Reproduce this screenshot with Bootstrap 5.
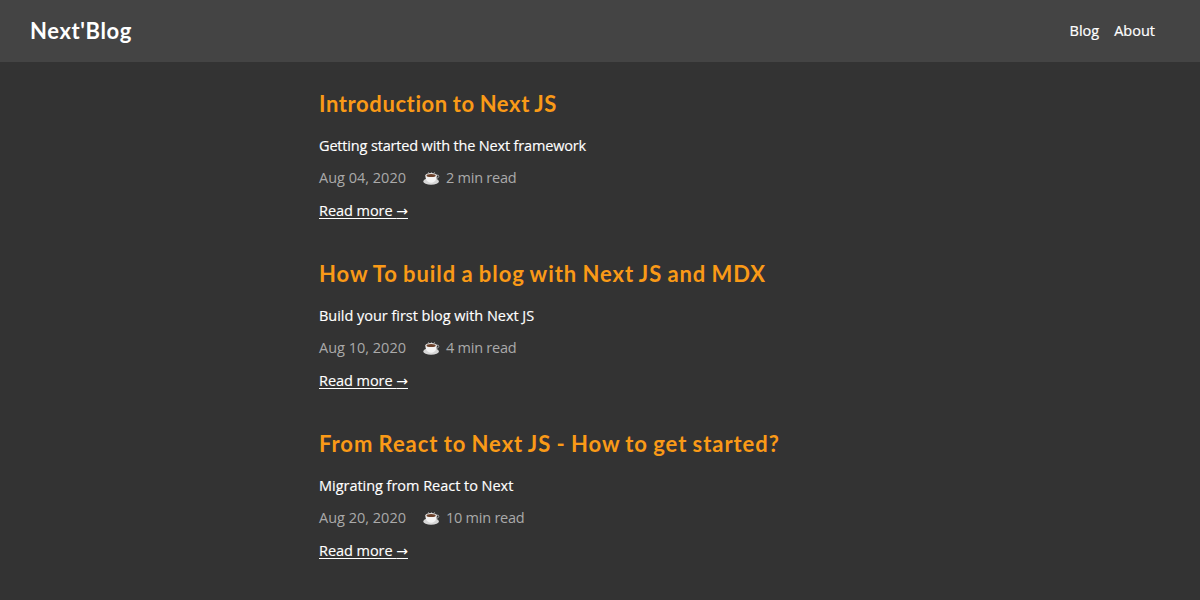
<!DOCTYPE html>
<html lang="en">
<head>
<meta charset="utf-8">
<meta name="viewport" content="width=device-width, initial-scale=1">
<title>Next'Blog</title>
<link href="https://cdn.jsdelivr.net/npm/bootstrap@5.3.0/dist/css/bootstrap.min.css" rel="stylesheet">
<style>
body { background: #333; color: #fff; font: 14.5px/20px "Open Sans", "Noto Sans", sans-serif; height: 600px; overflow: hidden; }
.site-header { background: #444; height: 62px; padding: 0 45px 0 30px; }
.site-header .navbar-brand { font: 700 22px/30px Lato, sans-serif; letter-spacing: .6px; }
.site-header .nav-links { gap: 15px; }
.site-header .nav-link { font-size: 14.5px; line-height: 20px; -webkit-text-stroke: .2px #fff; }
.posts { width: 562px; padding-top: 27px; }
.post { height: 170.3px; }
.post-title { font: 700 22px/30px Lato, sans-serif; color: #fa9a17; letter-spacing: .94px; word-spacing: -1px; margin: -.3px 0 17.3px; }
.post:first-child .post-title { letter-spacing: .6px; }
.post p { margin-bottom: 12.4px; white-space: nowrap; }
.summary { -webkit-text-stroke: .15px #fff; letter-spacing: -.03px; }
.post:first-child .summary { letter-spacing: -.165px; }
.meta { color: #aaa; }
.read-time { letter-spacing: -.24px; }
.cup { width: 17px; height: 14px; margin: 0 6px 0 17px; }
.more { color: #fff; -webkit-text-stroke: .15px #fff; letter-spacing: -.05px; text-underline-offset: 2px; }
.arrow { font-family: "DejaVu Sans", sans-serif; font-size: 14px; -webkit-text-stroke: 0; }
</style>
</head>
<body>
<nav class="navbar site-header d-flex justify-content-between flex-nowrap">
  <a class="navbar-brand text-white p-0 m-0" href="#">Next'Blog</a>
  <div class="d-flex nav-links">
    <a class="nav-link text-white p-0" href="#">Blog</a>
    <a class="nav-link text-white p-0" href="#">About</a>
  </div>
</nav>
<svg class="d-none"><symbol id="cup" viewBox="0 0 17 14"><ellipse cx="8.1" cy="10.4" rx="7.8" ry="3.3" fill="#d7d7d7"/><path d="M13 4.2q3-.7 2.8 1.2-.3 2-3.6 2.6" fill="none" stroke="#bbb" stroke-width=".8"/><path d="M2.4 4.3h11.4c0 4-1.5 7.4-5.7 7.4S2.4 8.3 2.4 4.3z" fill="#f4f4f4"/><ellipse cx="8.1" cy="4.3" rx="5.7" ry="2.2" fill="#eee"/><ellipse cx="8.1" cy="4.6" rx="4.6" ry="1.5" fill="#6b4029"/><path d="M5 2.2l.8-1.2M8 2.2l.8-1.2M11 2.2l.8-1.2" stroke="#999" stroke-width=".8"/></symbol></svg>
<main class="container-fluid p-0">
  <div class="posts mx-auto">
    <article class="post">
      <h2 class="post-title">Introduction to Next JS</h2>
      <p class="summary">Getting started with the Next framework</p>
      <p class="meta d-flex align-items-center"><span>Aug 04, 2020</span><svg class="cup"><use href="#cup"/></svg><span class="read-time">2 min read</span></p>
      <a class="more" href="#">Read more <span class="arrow">→</span></a>
    </article>
    <article class="post">
      <h2 class="post-title">How To build a blog with Next JS and MDX</h2>
      <p class="summary">Build your first blog with Next JS</p>
      <p class="meta d-flex align-items-center"><span>Aug 10, 2020</span><svg class="cup"><use href="#cup"/></svg><span class="read-time">4 min read</span></p>
      <a class="more" href="#">Read more <span class="arrow">→</span></a>
    </article>
    <article class="post">
      <h2 class="post-title">From React to Next JS - How to get started?</h2>
      <p class="summary">Migrating from React to Next</p>
      <p class="meta d-flex align-items-center"><span>Aug 20, 2020</span><svg class="cup"><use href="#cup"/></svg><span class="read-time">10 min read</span></p>
      <a class="more" href="#">Read more <span class="arrow">→</span></a>
    </article>
  </div>
</main>
<script src="https://cdn.jsdelivr.net/npm/bootstrap@5.3.0/dist/js/bootstrap.bundle.min.js"></script>
</body>
</html>
